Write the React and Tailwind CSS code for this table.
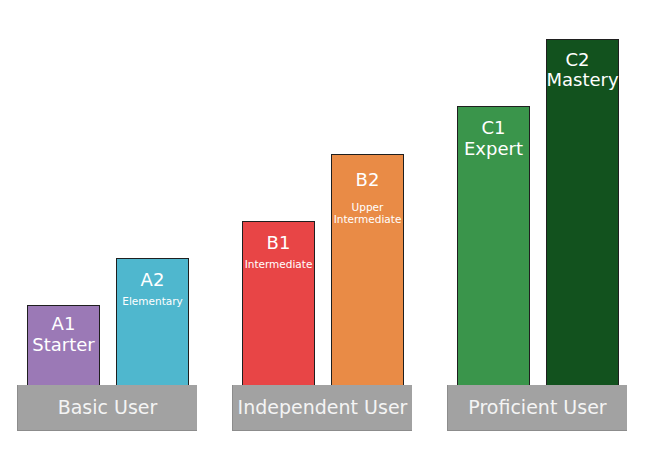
import React from "react";

const groups = [
  {
    label: "Basic User",
    bars: [
      { code: "A1", name: "Starter", big: true, h: "h-[81px]", bg: "bg-[#9b79b6]", pt: "pt-[7px]", sub: "leading-[21px]", lead: "leading-[21px]" },
      { code: "A2", name: "Elementary", big: false, h: "h-[128px]", bg: "bg-[#4fb7ce]", pt: "pt-[10px]", sub: "mt-[5px]", lead: "leading-[21px]" },
    ],
  },
  {
    label: "Independent User",
    bars: [
      { code: "B1", name: "Intermediate", big: false, h: "h-[165px]", bg: "bg-[#e84546]", pt: "pt-[10px]", sub: "mt-[5px]", lead: "leading-[21px]" },
      { code: "B2", name: "Upper\nIntermediate", big: false, h: "h-[232px]", bg: "bg-[#e98b46]", pt: "pt-[14px]", sub: "mt-[11px]", lead: "leading-[21px]" },
    ],
  },
  {
    label: "Proficient User",
    bars: [
      { code: "C1", name: "Expert", big: true, h: "h-[280px]", bg: "bg-[#3a954b]", pt: "pt-[10px]", sub: "leading-[21px]", lead: "leading-[21px]" },
      { code: "C2", name: "Mastery", big: true, h: "h-[347px]", bg: "bg-[#12521e]", pt: "pt-[10px]", sub: "leading-[20px]", lead: "leading-[20px] mr-[10px]" },
    ],
  },
];

function Bar({ bar }) {
  return (
    <div
      className={`w-[73px] ${bar.h} ${bar.bg} ${bar.pt} border border-[#1f1f1f] flex flex-col items-center text-white text-center`}
    >
      <div className={`text-[18px] ${bar.lead}`}>{bar.code}</div>
      {bar.big ? (
        <div className={`text-[18px] ${bar.sub}`}>{bar.name}</div>
      ) : (
        <div className={`text-[10.5px] leading-[12px] whitespace-pre-line ${bar.sub}`}>
          {bar.name}
        </div>
      )}
    </div>
  );
}

export default function App() {
  return (
    <div
      className="w-[646px] h-[474px] bg-white flex items-end gap-[35px] pl-[17px] pb-[43px]"
      style={{ fontFamily: '"DejaVu Sans", "Open Sans", sans-serif' }}
    >
      {groups.map((g) => (
        <div key={g.label} className="flex flex-col w-[180px]">
          <div className="flex items-end gap-[16px] pl-[10px]">
            {g.bars.map((b) => (
              <Bar key={b.code} bar={b} />
            ))}
          </div>
          <div className="h-[46px] -mt-px bg-[#a2a2a2] border-l border-b border-[#8c8c8c] flex items-center justify-center text-[19px] text-[#f4f4f4]">
            {g.label}
          </div>
        </div>
      ))}
    </div>
  );
}
